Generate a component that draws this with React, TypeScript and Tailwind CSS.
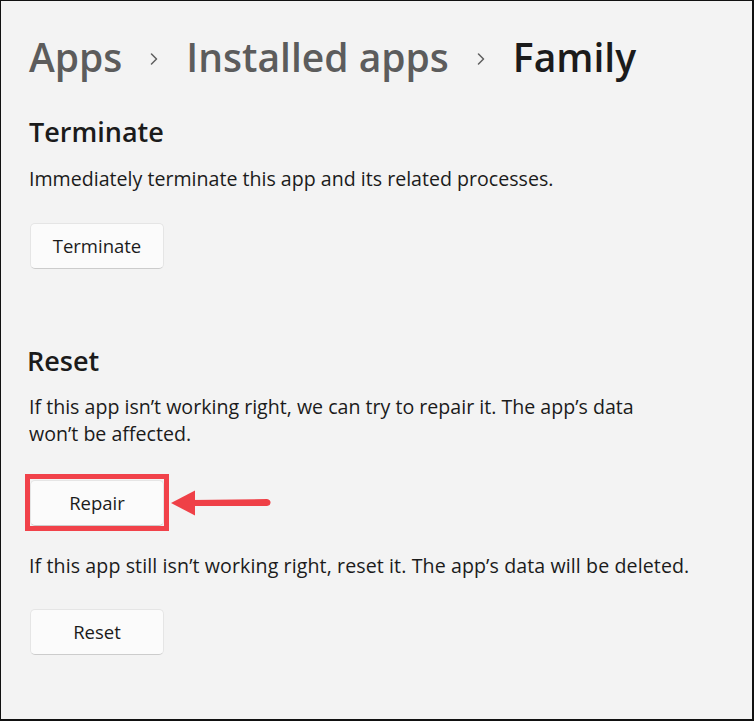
import React from 'react';

const font = { fontFamily: '"Open Sans", "Noto Sans", sans-serif' };

function Chevron() {
  return (
    <svg width="8" height="12" viewBox="0 0 8 12" className="shrink-0 mt-[4px]" fill="none">
      <path d="M1.5 1 L6.5 6 L1.5 11" stroke="#5f5f5f" strokeWidth="1.5" strokeLinecap="round" strokeLinejoin="round" />
    </svg>
  );
}

function WinButton({ label }: { label: string }) {
  return (
    <button className="w-[134px] h-[46px] rounded-[5px] bg-[#fbfbfb] border border-[#e5e5e5] border-b-[#cccccc] text-[18.5px] text-[#1b1b1b] flex items-center justify-center">
      {label}
    </button>
  );
}

function Arrow() {
  return (
    <svg width="100" height="28" viewBox="0 0 100 28" className="shrink-0">
      <path d="M0 14 L24 1.5 L24 26.5 Z" fill="#ef4047" />
      <path d="M20 11 L96 10 Q99.5 10.5 99.5 13.5 Q99.5 16.5 96 17 L20 17 Z" fill="#ef4047" />
    </svg>
  );
}

export default function App() {
  return (
    <div
      className="w-[754px] h-[721px] bg-[#f3f3f3] border-l border-t border-r-2 border-b-2 border-[#111111] pl-[28px] pt-[28px] text-[#1b1b1b] overflow-hidden"
      style={font}
    >
      {/* breadcrumb */}
      <div className="flex items-center h-[56px] text-[39px] font-semibold leading-[56px]">
        <span className="text-[#5c5c5c]">Apps</span>
        <span className="mx-[28px] flex items-center"><Chevron /></span>
        <span className="text-[#5c5c5c]">Installed apps</span>
        <span className="mx-[28px] flex items-center"><Chevron /></span>
        <span className="text-[#1b1b1b]">Family</span>
      </div>

      {/* Terminate */}
      <h2 className="mt-[29px] text-[27px] font-semibold leading-[36px]">Terminate</h2>
      <p className="mt-[15px] text-[19.6px] leading-[28px]">
        Immediately terminate this app and its related processes.
      </p>
      <div className="mt-[30px] ml-[1px]">
        <WinButton label="Terminate" />
      </div>

      {/* Reset */}
      <h2 className="mt-[74px] -ml-[2px] text-[27px] font-semibold leading-[36px]">Reset</h2>
      <p className="mt-[14px] text-[19.6px] leading-[27px]">
        If this app isn’t working right, we can try to repair it. The app’s data
        <br />
        won’t be affected.
      </p>
      <div className="mt-[27px] -ml-[4px] flex items-center">
        <div className="border-[5px] border-[#f1424a] pt-[1px] h-[57px]">
          <WinButton label="Repair" />
        </div>
        <div className="ml-[2px]">
          <Arrow />
        </div>
      </div>
      <p className="mt-[21px] text-[19.6px] leading-[27px] tracking-[0.1px]">
        If this app still isn’t working right, reset it. The app’s data will be deleted.
      </p>
      <div className="mt-[30px] ml-[1px]">
        <WinButton label="Reset" />
      </div>
    </div>
  );
}
